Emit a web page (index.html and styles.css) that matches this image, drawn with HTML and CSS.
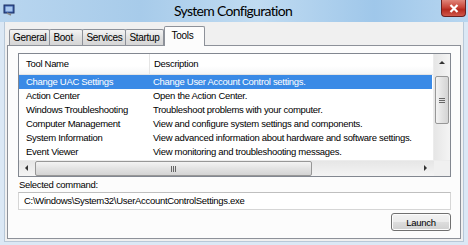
FILE: index.html
```html
<!DOCTYPE html>
<html lang="en">
<head>
    <meta charset="UTF-8">
    <title>System Configuration</title>
    <link rel="stylesheet" href="styles.css">
</head>
<body>
    <div class="window">
        <!-- Barra de título -->
        <div class="titlebar">
            <div class="app-icon">
                <svg width="12" height="12" viewBox="0 0 12 12">
                    <rect x="1" y="1" width="10" height="8" fill="#3b5fa8" stroke="#1c2f63"/>
                    <rect x="2.5" y="2.5" width="7" height="5" fill="#a8c8f0"/>
                    <path d="M4 9 L8 11" stroke="#888" stroke-width="1.5"/>
                </svg>
            </div>
            <div class="title">System Configuration</div>
            <div class="controls">
                <button class="close-btn">
                    <svg width="10" height="9" viewBox="0 0 10 9">
                        <path d="M1.5 1 L8.5 8 M8.5 1 L1.5 8" stroke="#fff" stroke-width="2.2"/>
                    </svg>
                </button>
            </div>
        </div>

        <div class="frame">
            <!-- Abas -->
            <div class="tabs">
                <div class="tab">General</div>
                <div class="tab">Boot</div>
                <div class="tab">Services</div>
                <div class="tab">Startup</div>
                <div class="tab active">Tools</div>
            </div>

            <div class="panel">
                <div class="list">
                    <div class="list-main">
                        <div class="list-body">
                            <div class="row header">
                                <div class="col-name">Tool Name</div>
                                <div class="col-desc">Description</div>
                            </div>
                            <div class="row selected">
                                <div class="col-name">Change UAC Settings</div>
                                <div class="col-desc">Change User Account Control settings.</div>
                            </div>
                            <div class="row">
                                <div class="col-name">Action Center</div>
                                <div class="col-desc">Open the Action Center.</div>
                            </div>
                            <div class="row">
                                <div class="col-name">Windows Troubleshooting</div>
                                <div class="col-desc">Troubleshoot problems with your computer.</div>
                            </div>
                            <div class="row">
                                <div class="col-name">Computer Management</div>
                                <div class="col-desc">View and configure system settings and components.</div>
                            </div>
                            <div class="row">
                                <div class="col-name">System Information</div>
                                <div class="col-desc">View advanced information about hardware and software settings.</div>
                            </div>
                            <div class="row">
                                <div class="col-name">Event Viewer</div>
                                <div class="col-desc">View monitoring and troubleshooting messages.</div>
                            </div>
                        </div>
                        <div class="vscroll">
                            <div class="arrow up"></div>
                            <div class="vtrack">
                                <div class="vthumb"><span class="grip"></span></div>
                            </div>
                        </div>
                    </div>
                    <div class="hscroll">
                        <div class="arrow left"></div>
                        <div class="htrack">
                            <div class="hthumb"><span class="grip"></span></div>
                        </div>
                        <div class="arrow right"></div>
                        <div class="corner"></div>
                    </div>
                </div>

                <div class="cmd-label">Selected command:</div>
                <div class="cmd-box">C:\Windows\System32\UserAccountControlSettings.exe</div>
                <div class="actions">
                    <button class="launch-btn">Launch</button>
                </div>
            </div>
        </div>
    </div>
</body>
</html>
```

FILE: styles.css
```css
/* Estilo geral */
body {
    margin: 0;
    padding: 0;
    font-family: "Liberation Sans", Arial, sans-serif;
    font-size: 9.5px;
    letter-spacing: -0.3px;
    color: #000;
    background: #8fb6d8;
}

.window {
    width: 468px;
    height: 245px;
    display: flex;
    flex-direction: column;
    background: #dbe8f5;
    overflow: hidden;
}

/* Barra de título */
.titlebar {
    height: 22px;
    display: grid;
    grid-template-columns: 1fr auto 1fr;
    align-items: start;
    background: linear-gradient(90deg, #b9d6ef 0%, #a7cbea 30%, #c0dbf1 55%, #9fc7ea 80%, #b7d6f0 100%);
}

.app-icon {
    padding: 4px 0 0 3px;
}

.title {
    font-family: "Lato", "Liberation Sans", sans-serif;
    font-size: 14px;
    letter-spacing: -0.7px;
    line-height: 22px;
    color: #000;
    padding-right: 2px;
}

.controls {
    display: flex;
    justify-content: flex-end;
    padding-right: 2px;
}

.close-btn {
    width: 25px;
    height: 17px;
    border: 1px solid #6b2020;
    border-top: none;
    border-radius: 0 0 4px 4px;
    background: linear-gradient(#e0857a 0%, #c9463a 45%, #b52a1f 60%, #d0574a 100%);
    display: flex;
    justify-content: center;
    align-items: center;
    padding: 0;
}

/* Corpo da janela */
.frame {
    flex: 1;
    margin: 0 4px 3px 4px;
    padding: 4px 2px 2px 2px;
    background: #f0f0f0;
    border: 1px solid #b8c8d8;
    border-top: none;
    display: flex;
    flex-direction: column;
}

.tabs {
    display: flex;
    align-items: flex-end;
    height: 19px;
    padding-left: 2px;
}

.tab {
    min-width: 26px;
    height: 15px;
    line-height: 15px;
    padding: 0 3px;
    border: 1px solid #8d9199;
    border-bottom: none;
    margin-right: -1px;
    background: linear-gradient(#f4f4f4, #e1e1e1 50%, #d6d6d6);
    border-radius: 2px 2px 0 0;
    font-size: 10px;
}

.tab.active {
    height: 19px;
    line-height: 17px;
    padding: 0 6px 0 7px;
    background: #fcfcfc;
    position: relative;
    z-index: 1;
    margin-bottom: -1px;
    margin-left: 1px;
}

.panel {
    flex: 1;
    background: #fcfcfc;
    border: 1px solid #8d9199;
    padding: 7px 9px 0 10px;
    display: flex;
    flex-direction: column;
}

/* Lista de ferramentas */
.list {
    border: 1px solid #828790;
    background: #fff;
    display: flex;
    flex-direction: column;
}

.list-main {
    display: flex;
    height: 106px;
}

.list-body {
    flex: 1;
    overflow: hidden;
}

.row {
    display: flex;
    height: 14px;
    line-height: 14px;
    white-space: nowrap;
}

.row.header {
    height: 20px;
    line-height: 20px;
    background: linear-gradient(#fff, #fff 60%, #f5f6f7);
    border-bottom: 1px solid #e5e5e5;
}

.row.header .col-name {
    border-right: 1px solid #e5e5e5;
}

.col-name {
    width: 123px;
    padding-left: 7px;
    flex: none;
}

.col-desc {
    padding-left: 4px;
}

.row.selected {
    background: #3a8ae6;
    color: #fff;
    margin-right: 1px;
}

/* Barras de rolagem */
.vscroll {
    width: 16px;
    display: flex;
    flex-direction: column;
    background: linear-gradient(90deg, #e6e6e6, #f4f4f4);
    border-left: 1px solid #ececec;
}

.arrow {
    width: 16px;
    height: 16px;
    flex: none;
    position: relative;
}

.arrow::after {
    content: "";
    position: absolute;
    width: 0;
    height: 0;
    border: 3px solid transparent;
}

.arrow.up::after {
    left: 5px;
    top: 4px;
    border-bottom: 3px solid #333;
}

.arrow.left::after {
    left: 3px;
    top: 4px;
    border-right: 3px solid #333;
}

.arrow.right::after {
    left: 6px;
    top: 4px;
    border-left: 3px solid #333;
}

.vtrack {
    flex: 1;
    padding-top: 6px;
}

.vthumb {
    height: 46px;
    margin: 0 1px;
    border: 1px solid #979797;
    border-radius: 2px;
    background: linear-gradient(90deg, #f3f3f3, #e2e2e2 50%, #d4d4d4);
    display: flex;
    justify-content: center;
    align-items: center;
}

.vthumb .grip {
    width: 6px;
    height: 5px;
    background: repeating-linear-gradient(#666 0 1px, transparent 1px 2px);
}

.hscroll {
    display: flex;
    height: 15px;
    background: linear-gradient(#e6e6e6, #f4f4f4);
    border-top: 1px solid #ececec;
}

.htrack {
    flex: 1;
    padding-right: 106px;
}

.hthumb {
    height: 13px;
    border: 1px solid #979797;
    border-radius: 2px;
    background: linear-gradient(#f3f3f3, #e2e2e2 50%, #d4d4d4);
    display: flex;
    justify-content: center;
    align-items: center;
}

.hthumb .grip {
    width: 5px;
    height: 6px;
    background: repeating-linear-gradient(90deg, #666 0 1px, transparent 1px 2px);
}

.corner {
    width: 16px;
    background: #f0f0f0;
}

/* Comando selecionado */
.cmd-label {
    margin-top: 2px;
    height: 12px;
    line-height: 12px;
    padding-left: 1px;
}

.cmd-box {
    margin-top: 1px;
    height: 16px;
    line-height: 16px;
    border: 1px solid #d6d6d6;
    border-top-color: #bfbfbf;
    background: #fff;
    padding-left: 5px;
}

.actions {
    display: flex;
    justify-content: flex-end;
    margin-top: 3px;
}

.launch-btn {
    width: 60px;
    height: 18px;
    padding: 0;
    font-family: "Liberation Sans", Arial, sans-serif;
    font-size: 9.5px;
    letter-spacing: -0.3px;
    color: #000;
    border: 1px solid #707070;
    border-radius: 3px;
    background: linear-gradient(#f2f2f2, #ebebeb 50%, #dddddd 51%, #cfcfcf);
    box-shadow: inset 0 0 0 1px #fcfcfc;
}
```
